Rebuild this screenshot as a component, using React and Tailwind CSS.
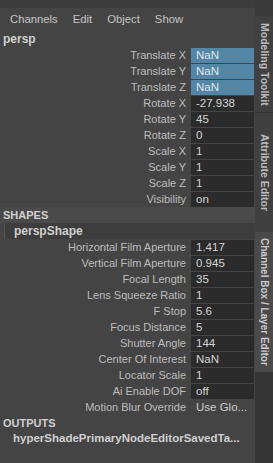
import React from "react";

const F = { fontFamily: '"Liberation Sans", Arial, sans-serif' };

function Row({ label, value, kind = "dark" }) {
  const field =
    kind === "blue"
      ? "bg-[#5285a6] text-[#e4e4e4]"
      : kind === "none"
      ? "text-[#cccccc]"
      : "bg-[#2b2b2b] text-[#d4d4d4]";
  return (
    <div className="flex h-[16px] items-center">
      <div className="flex-1 pr-[5px] text-right text-[11px] text-[#bdbdbd] leading-none whitespace-nowrap">
        {label}
      </div>
      <div className={`h-[15px] w-[63px] mr-[1px] pl-[5px] text-[11.5px] leading-[15px] whitespace-nowrap overflow-hidden ${field}`}>
        {value}
      </div>
    </div>
  );
}

export default function App() {
  return (
    <div style={F} className="w-[273px] h-[463px] bg-[#444444] flex overflow-hidden">
      <div className="w-[255px] flex flex-col">
        <div className="h-[8px] bg-[#3c3c3c]" />
        <div className="h-[23px] flex items-center pl-[10px] gap-[15px] text-[11.3px] text-[#c4c4c4]">
          <span>Channels</span>
          <span>Edit</span>
          <span>Object</span>
          <span>Show</span>
        </div>
        <div className="h-[16px] flex items-center pl-[3px] text-[12px] font-bold text-[#d0d0d0]">persp</div>
        <Row label="Translate X" value="NaN" kind="blue" />
        <Row label="Translate Y" value="NaN" kind="blue" />
        <Row label="Translate Z" value="NaN" kind="blue" />
        <Row label="Rotate X" value="-27.938" />
        <Row label="Rotate Y" value="45" />
        <Row label="Rotate Z" value="0" />
        <Row label="Scale X" value="1" />
        <Row label="Scale Y" value="1" />
        <Row label="Scale Z" value="1" />
        <Row label="Visibility" value="on" />
        <div className="h-[16px] flex items-center pl-[3px] text-[11px] font-bold text-[#d0d0d0] bg-[#4a4a4a]">SHAPES</div>
        <div className="h-[16px] flex items-center bg-[#3d3d3d] ml-[4px] border-l border-[#555] pl-[9px] text-[12px] font-bold text-[#d0d0d0]">perspShape</div>
        <Row label="Horizontal Film Aperture" value="1.417" />
        <Row label="Vertical Film Aperture" value="0.945" />
        <Row label="Focal Length" value="35" />
        <Row label="Lens Squeeze Ratio" value="1" />
        <Row label="F Stop" value="5.6" />
        <Row label="Focus Distance" value="5" />
        <Row label="Shutter Angle" value="144" />
        <Row label="Center Of Interest" value="NaN" />
        <Row label="Locator Scale" value="1" />
        <Row label="Ai Enable DOF" value="off" />
        <Row label="Motion Blur Override" value="Use Glo..." kind="none" />
        <div className="h-[16px] flex items-center pl-[3px] text-[11px] font-bold text-[#d0d0d0]">OUTPUTS</div>
        <div className="h-[16px] flex items-center pl-[13px] text-[11.5px] font-bold text-[#d0d0d0] whitespace-nowrap">hyperShadePrimaryNodeEditorSavedTa...</div>
      </div>
      <div className="w-[18px] flex flex-col bg-[#3a3a3a]">
        <div className="h-[16px]" />
        <div className="h-[96px] bg-[#404040] flex justify-center items-center whitespace-nowrap text-[10.5px] font-bold text-[#bcbcbc] [writing-mode:vertical-rl]">
          Modeling Toolkit
        </div>
        <div className="h-[120px] bg-[#404040] border-t border-[#333] flex justify-center items-center whitespace-nowrap text-[10.5px] font-bold text-[#bcbcbc] [writing-mode:vertical-rl]">
          Attribute Editor
        </div>
        <div className="h-[140px] bg-[#4a4a4a] flex justify-center items-center whitespace-nowrap text-[10px] font-bold text-[#cccccc] [writing-mode:vertical-rl]">
          Channel Box / Layer Editor
        </div>
        <div className="flex-1 bg-[#353535]" />
      </div>
    </div>
  );
}
